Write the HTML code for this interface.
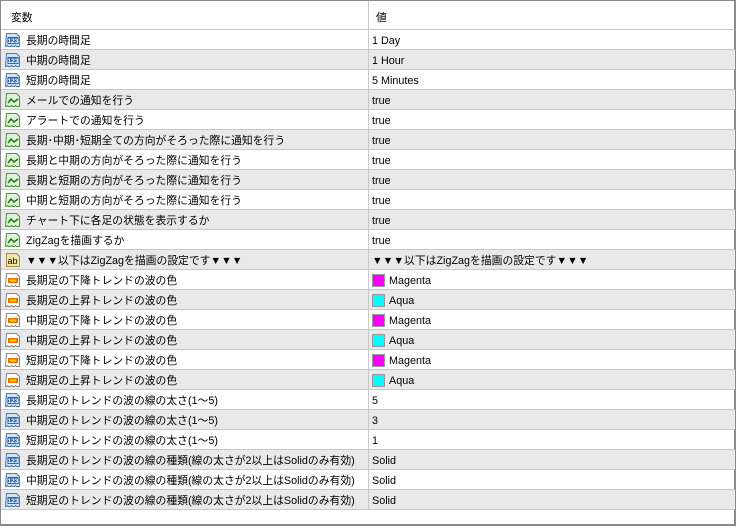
<!DOCTYPE html>
<html><head><meta charset="utf-8"><style>
*{margin:0;padding:0;box-sizing:border-box}
body{width:740px;height:529px;background:#fff;font-family:"Liberation Sans","Noto Sans CJK JP",sans-serif;font-size:10.8px;line-height:16px;color:#000;overflow:hidden;position:relative}
#frame{position:absolute;left:0;top:0;width:736px;height:526px;border:1px solid #8a8a8a;border-right:2px solid #8a8a8a;border-bottom:2px solid #8a8a8a;background:#fff}
.hdr{position:absolute;left:0;top:0;width:734px;height:29px;border-bottom:1px solid #c8c8c8}
.hdr span{position:absolute;top:9px}
.row{position:absolute;left:0;width:734px;height:20px;border-bottom:1px solid #c8c8c8}
.row.g{background:#e9e9e9}
.vl{position:absolute;left:367px;top:0;width:1px;height:509px;background:#c8c8c8}
.ic{position:absolute;left:4px;top:2px;width:16px;height:16px}
.n{position:absolute;left:25px;top:2.5px;white-space:nowrap}
.v{position:absolute;left:371px;top:2.5px;white-space:nowrap}
.sw{display:inline-block;width:13px;height:13px;border:1px solid #999;vertical-align:-3px;margin-right:4px}
</style></head><body>
<svg width="0" height="0" style="position:absolute">
<defs>
<symbol id="num" viewBox="0 0 16 16"><path d="M1.5 1.5h10l3 3v10h-3l-1-1-1 1h-2l-1-1-1 1h-2l-1-1-1 1h-1z" fill="#cfe2f6" stroke="#4a7cb8"/><rect x="2.5" y="5" width="11" height="7" fill="#2f66b0"/><text x="8" y="11" font-size="6.5" font-family="Liberation Sans" font-weight="bold" fill="#fff" text-anchor="middle">123</text></symbol>
<symbol id="bool" viewBox="0 0 16 16"><path d="M1.5 1.5h10l3 3v10h-3l-1-1-1 1h-2l-1-1-1 1h-2l-1-1-1 1h-1z" fill="#dff3d8" stroke="#4a9a3a"/><path d="M3 11l3-4 3 3 4-3" fill="none" stroke="#1d7a12" stroke-width="1.5"/></symbol>
<symbol id="str" viewBox="0 0 16 16"><path d="M1.5 1.5h10l3 3v10h-13z" fill="#f3e6a6" stroke="#a89040"/><text x="7.5" y="12" font-size="9" font-family="Liberation Sans" fill="#000" text-anchor="middle">ab</text></symbol>
<symbol id="col" viewBox="0 0 16 16"><path d="M1.5 1.5h10l3 3v10h-3l-1-1-1 1h-2l-1-1-1 1h-2l-1-1-1 1h-1z" fill="#fff" stroke="#888"/><rect x="3" y="6" width="10" height="5" fill="#f07000"/><rect x="5" y="7.5" width="6" height="2" fill="#ffd000"/></symbol>
</defs></svg>
<div id="frame">
<div class="hdr"><span style="left:10px">変数</span><span style="left:375px">値</span></div>
<div class="row" style="top:29px"><svg class="ic" viewBox="0 0 16 16"><use href="#num"/></svg><span class="n">長期の時間足</span><span class="v">1 Day</span></div>
<div class="row g" style="top:49px"><svg class="ic" viewBox="0 0 16 16"><use href="#num"/></svg><span class="n">中期の時間足</span><span class="v">1 Hour</span></div>
<div class="row" style="top:69px"><svg class="ic" viewBox="0 0 16 16"><use href="#num"/></svg><span class="n">短期の時間足</span><span class="v">5 Minutes</span></div>
<div class="row g" style="top:89px"><svg class="ic" viewBox="0 0 16 16"><use href="#bool"/></svg><span class="n">メールでの通知を行う</span><span class="v">true</span></div>
<div class="row" style="top:109px"><svg class="ic" viewBox="0 0 16 16"><use href="#bool"/></svg><span class="n">アラートでの通知を行う</span><span class="v">true</span></div>
<div class="row g" style="top:129px"><svg class="ic" viewBox="0 0 16 16"><use href="#bool"/></svg><span class="n">長期･中期･短期全ての方向がそろった際に通知を行う</span><span class="v">true</span></div>
<div class="row" style="top:149px"><svg class="ic" viewBox="0 0 16 16"><use href="#bool"/></svg><span class="n">長期と中期の方向がそろった際に通知を行う</span><span class="v">true</span></div>
<div class="row g" style="top:169px"><svg class="ic" viewBox="0 0 16 16"><use href="#bool"/></svg><span class="n">長期と短期の方向がそろった際に通知を行う</span><span class="v">true</span></div>
<div class="row" style="top:189px"><svg class="ic" viewBox="0 0 16 16"><use href="#bool"/></svg><span class="n">中期と短期の方向がそろった際に通知を行う</span><span class="v">true</span></div>
<div class="row g" style="top:209px"><svg class="ic" viewBox="0 0 16 16"><use href="#bool"/></svg><span class="n">チャート下に各足の状態を表示するか</span><span class="v">true</span></div>
<div class="row" style="top:229px"><svg class="ic" viewBox="0 0 16 16"><use href="#bool"/></svg><span class="n">ZigZagを描画するか</span><span class="v">true</span></div>
<div class="row g" style="top:249px"><svg class="ic" viewBox="0 0 16 16"><use href="#str"/></svg><span class="n">▼▼▼以下はZigZagを描画の設定です▼▼▼</span><span class="v">▼▼▼以下はZigZagを描画の設定です▼▼▼</span></div>
<div class="row" style="top:269px"><svg class="ic" viewBox="0 0 16 16"><use href="#col"/></svg><span class="n">長期足の下降トレンドの波の色</span><span class="v"><i class="sw" style="background:#f0f"></i>Magenta</span></div>
<div class="row g" style="top:289px"><svg class="ic" viewBox="0 0 16 16"><use href="#col"/></svg><span class="n">長期足の上昇トレンドの波の色</span><span class="v"><i class="sw" style="background:#0ff"></i>Aqua</span></div>
<div class="row" style="top:309px"><svg class="ic" viewBox="0 0 16 16"><use href="#col"/></svg><span class="n">中期足の下降トレンドの波の色</span><span class="v"><i class="sw" style="background:#f0f"></i>Magenta</span></div>
<div class="row g" style="top:329px"><svg class="ic" viewBox="0 0 16 16"><use href="#col"/></svg><span class="n">中期足の上昇トレンドの波の色</span><span class="v"><i class="sw" style="background:#0ff"></i>Aqua</span></div>
<div class="row" style="top:349px"><svg class="ic" viewBox="0 0 16 16"><use href="#col"/></svg><span class="n">短期足の下降トレンドの波の色</span><span class="v"><i class="sw" style="background:#f0f"></i>Magenta</span></div>
<div class="row g" style="top:369px"><svg class="ic" viewBox="0 0 16 16"><use href="#col"/></svg><span class="n">短期足の上昇トレンドの波の色</span><span class="v"><i class="sw" style="background:#0ff"></i>Aqua</span></div>
<div class="row" style="top:389px"><svg class="ic" viewBox="0 0 16 16"><use href="#num"/></svg><span class="n">長期足のトレンドの波の線の太さ(1～5)</span><span class="v">5</span></div>
<div class="row g" style="top:409px"><svg class="ic" viewBox="0 0 16 16"><use href="#num"/></svg><span class="n">中期足のトレンドの波の線の太さ(1～5)</span><span class="v">3</span></div>
<div class="row" style="top:429px"><svg class="ic" viewBox="0 0 16 16"><use href="#num"/></svg><span class="n">短期足のトレンドの波の線の太さ(1～5)</span><span class="v">1</span></div>
<div class="row g" style="top:449px"><svg class="ic" viewBox="0 0 16 16"><use href="#num"/></svg><span class="n">長期足のトレンドの波の線の種類(線の太さが2以上はSolidのみ有効)</span><span class="v">Solid</span></div>
<div class="row" style="top:469px"><svg class="ic" viewBox="0 0 16 16"><use href="#num"/></svg><span class="n">中期足のトレンドの波の線の種類(線の太さが2以上はSolidのみ有効)</span><span class="v">Solid</span></div>
<div class="row g" style="top:489px"><svg class="ic" viewBox="0 0 16 16"><use href="#num"/></svg><span class="n">短期足のトレンドの波の線の種類(線の太さが2以上はSolidのみ有効)</span><span class="v">Solid</span></div>
<div class="vl"></div>
</div>
</body></html>
